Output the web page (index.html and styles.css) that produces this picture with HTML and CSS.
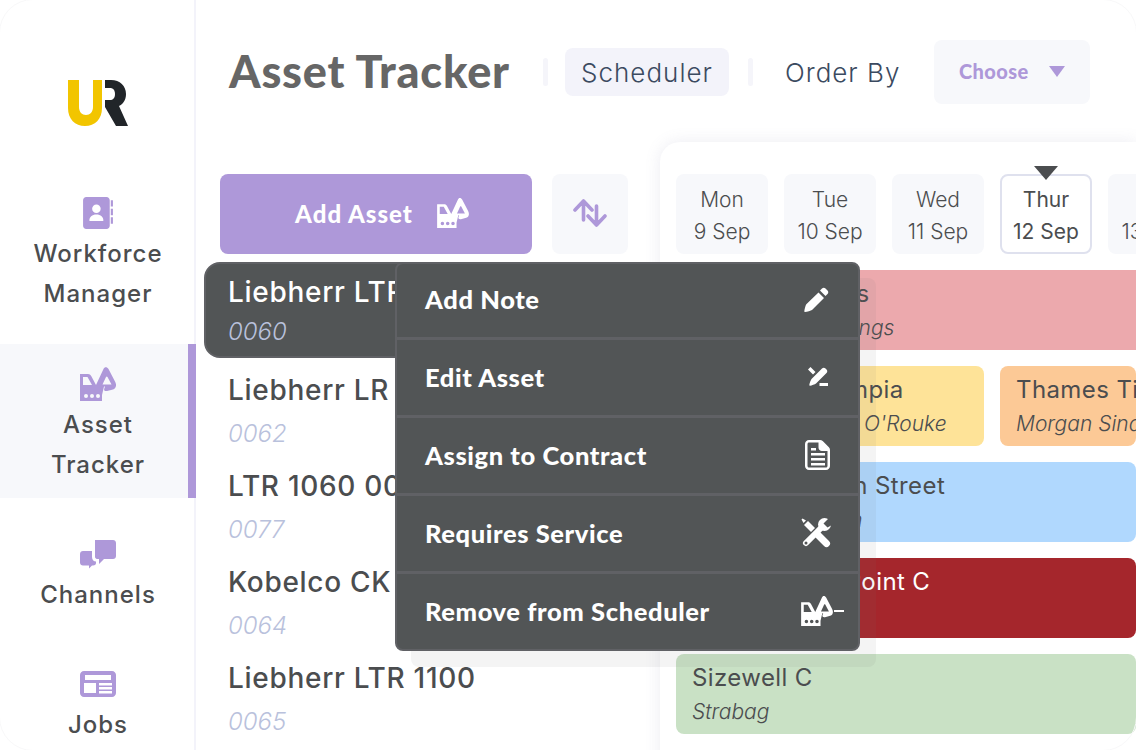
FILE: index.html
```html
<!DOCTYPE html>
<html lang="en">
<head>
    <meta charset="UTF-8">
    <title>Asset Tracker</title>
    <link rel="stylesheet" href="styles.css">
</head>
<body>
    <svg class="defs" width="0" height="0">
        <symbol id="digger" viewBox="0 0 36 34">
            <path fill-rule="evenodd" d="M0 7h8c1.500 0 2.500.7 3.200 2L16 18 23.500 2c1-2.500 3.500-2.500 5 0L35 14.500c2 3.500 1 7-2 8l-6 1.500c-2.500.5-3.500-1-2.500-3l.5-1.500h-1L22 28v6H0zM3 10v8h9L7.500 10zM26 10l-3.500 7.500h9L27.500 10c-.4-.7-1.100-.7-1.500 0zM6 27a2 2 0 1 0 0 4 2 2 0 0 0 0-4zM12 27a2 2 0 1 0 0 4 2 2 0 0 0 0-4zM18 27a2 2 0 1 0 0 4 2 2 0 0 0 0-4z"/>
        </symbol>
    </svg>
    <div class="app">
        <nav class="side">
            <svg class="logo" viewBox="0 0 60 46" width="60" height="46">
                <path fill="#f2c500" d="M0 0h11v27c0 5 3 8 7 8s7-3 7-8V0h9v28c0 11-7 18-17 18S0 39 0 28z"/>
                <path fill="#212529" d="M37 0h6c9 0 15 6 15 14 0 6-3 10-7 12l9 20H48L37 27v-7h5c3 0 5-2 5-6s-2-6-5-6h-5z"/>
            </svg>
            <a class="nav-item workforce">
                <svg class="nav-icon" viewBox="0 0 28 30">
                    <path fill-rule="evenodd" d="M3 0h19c1.700 0 3 1.300 3 3v24c0 1.700-1.300 3-3 3H3c-1.700 0-3-1.300-3-3V3c0-1.700 1.300-3 3-3zM12.500 7a4 4 0 1 0 0 8 4 4 0 0 0 0-8zM6 22.500h13c.3-3.500-2.500-6-6.500-6s-6.800 2.500-6.500 6z"/>
                    <path d="M26 3h2v6h-2zM26 11h2v6h-2zM26 19h2v6h-2z"/>
                </svg>
                <span>Workforce<br>Manager</span>
            </a>
            <a class="nav-item active">
                <svg class="nav-icon"><use href="#digger"/></svg>
                <span>Asset<br>Tracker</span>
            </a>
            <a class="nav-item channels">
                <svg class="nav-icon" viewBox="0 0 36 28">
                    <path d="M15 0h18c1.700 0 3 1.300 3 3v13c0 1.700-1.300 3-3 3H24l-5 5v-5h-1c-3 0-3-2-3-3z"/>
                    <path d="M3 11h9v6c0 3 2 4.500 4 4.500V23c0 1.500-1 2.500-3 2.500h-1l-3 3v-3H3c-1.700 0-3-1.300-3-3V14c0-1.700 1.300-3 3-3z"/>
                </svg>
                <span>Channels</span>
            </a>
            <a class="nav-item jobs">
                <svg class="nav-icon" viewBox="0 0 36 26">
                    <path fill-rule="evenodd" d="M4 0h28c2.200 0 4 1.800 4 4v18c0 2.200-1.800 4-4 4H4c-2.200 0-4-1.800-4-4V4c0-2.200 1.800-4 4-4zM5 4v5h26V4zM4 12v10h12V12zM19 12v2.500h13V12zM19 16v2.500h13V16zM19 20v2.500h13V20z"/>
                </svg>
                <span>Jobs</span>
            </a>
        </nav>
        <main class="main">
            <header class="top">
                <h1>Asset Tracker</h1>
                <i class="sep"></i>
                <span class="tab">Scheduler</span>
                <i class="sep"></i>
                <span class="order">Order By</span>
                <span class="choose">Choose <b class="caret"></b></span>
            </header>
            <div class="content">
                <section class="assets">
                    <div class="actions">
                        <button class="add">Add Asset <svg class="add-icon"><use href="#digger"/></svg></button>
                        <button class="sort">
                            <svg viewBox="0 0 34 28" width="34" height="28" fill="none" stroke="#ae98d9" stroke-width="3.600" stroke-linecap="round" stroke-linejoin="round">
                                <path d="M2 11l8.500-9L19 11M10.500 3v18M15 17l8.500 9 8.500-9M23.500 25V7"/>
                            </svg>
                        </button>
                    </div>
                    <ul class="list">
                        <li class="asset selected"><strong>Liebherr LTR 1090</strong><em>0060</em></li>
                        <li class="asset"><strong>Liebherr LR 1300</strong><em>0062</em></li>
                        <li class="asset"><strong>LTR 1060 001</strong><em>0077</em></li>
                        <li class="asset"><strong>Kobelco CK 1100</strong><em>0064</em></li>
                        <li class="asset"><strong>Liebherr LTR 1100</strong><em>0065</em></li>
                    </ul>
                </section>
                <section class="panel">
                    <div class="days">
                        <div class="day"><span>Mon</span><span>9 Sep</span></div>
                        <div class="day"><span>Tue</span><span>10 Sep</span></div>
                        <div class="day"><span>Wed</span><span>11 Sep</span></div>
                        <div class="day today"><span>Thur</span><span>12 Sep</span></div>
                        <div class="day"><span>Fri</span><span>13 Sep</span></div>
                    </div>
                    <div class="lane"><div class="job red"><strong>Docklines</strong><em>Jack Hastings</em></div></div>
                    <div class="lane">
                        <div class="job yellow"><strong>Olympia</strong><em>Sean O'Rouke</em></div>
                        <div class="job orange"><strong>Thames Tideway</strong><em>Morgan Sindall</em></div>
                    </div>
                    <div class="lane"><div class="job blue"><strong>Euston Street</strong><em>Costain</em></div></div>
                    <div class="lane"><div class="job crimson"><strong>Hinkley Point C</strong><em>EDF</em></div></div>
                    <div class="lane"><div class="job green"><strong>Sizewell C</strong><em>Strabag</em></div></div>
                </section>
            </div>
        </main>
        <ul class="menu">
            <li>Add Note
                <svg viewBox="0 0 28 28" width="28" height="28"><path d="M19 3.500c1-1 2.500-1 3.500 0l2 2c1 1 1 2.500 0 3.500l-2 2-5.500-5.500zM15.500 7.500L21 13 9 25c-1 .8-5 1.800-7 2-.5 0-.8-.3-.7-.8.200-2 1.200-6 2-7z"/></svg>
            </li>
            <li class="edit">Edit Asset
                <svg viewBox="0 0 22 22" width="22" height="22"><path d="M15 2.500c1-1 2.500-1 3.500 0l1 1c1 1 1 2.500 0 3.500L9 17.500c-1 .8-4.500 2-6 2.200-.5 0-.8-.3-.7-.8.2-1.500 1.400-5 2.200-6zM1 3.500L3.500 1l5 5L6 8.500zM12.500 17h8.500v3h-8.500z"/></svg>
            </li>
            <li>Assign to Contract
                <svg viewBox="0 0 26 30" width="26" height="30"><path fill-rule="evenodd" d="M4 0h11c1 0 2 .4 2.700 1.100l6.200 6.200c.7.700 1.100 1.700 1.100 2.700V26c0 2.200-1.800 4-4 4H4c-2.200 0-4-1.800-4-4V4c0-2.200 1.800-4 4-4zM4 2.500c-.8 0-1.500.7-1.500 1.500v22c0 .8.700 1.500 1.500 1.500h17c.8 0 1.500-.7 1.500-1.500V11H17c-2 0-3.500-1.500-3.500-3.500V2.500zM6 13h14v2.500H6zM6 18h14v2.500H6zM6 23h14v2.500H6zM6 8h5v2.500H6z"/></svg>
            </li>
            <li>Requires Service
                <svg viewBox="0 0 30 30" width="30" height="30">
                    <path d="M3 7l4-4 7 7-4 4z"/>
                    <path d="M2.500 5L5 2.500 1.500 .5 .5 1.500z"/>
                    <path stroke="#fff" stroke-width="7" stroke-linecap="round" d="M16 16l9.500 9.500"/>
                    <circle cx="23.500" cy="6.500" r="6.500"/>
                    <path stroke="#fff" stroke-width="6" stroke-linecap="round" d="M19 11L5 25"/>
                    <path fill="#525556" d="M22.500 5.500l7-7 2 8-5 3z"/>
                    <circle cx="5" cy="25" r="1.500" fill="#525556"/>
                </svg>
            </li>
            <li>Remove from Scheduler
                <span class="minus-icon"><svg><use href="#digger"/></svg><i></i></span>
            </li>
        </ul>
    </div>
</body>
</html>
```

FILE: styles.css
```css
* {
    padding: 0;
    margin: 0;
    box-sizing: border-box;
}
body {
    width: 1136px;
    height: 750px;
    overflow: hidden;
    background: #fff;
    font-family: "Inter", "Liberation Sans", sans-serif;
    color: #4b4d4f;
}
ul {
    list-style: none;
}
.defs {
    position: absolute;
}
.app {
    display: flex;
    width: 1136px;
    height: 750px;
    position: relative;
}
.app::after {
    content: "";
    position: absolute;
    inset: -1px;
    border: 1px solid #f8f8f9;
    border-radius: 34px;
    pointer-events: none;
}

/* sidebar */
.side {
    flex: 0 0 196px;
    width: 196px;
    min-width: 0;
    display: flex;
    flex-direction: column;
    border-right: 2px solid #f3f3fa;
    padding-top: 80px;
}
.logo {
    flex: none;
    align-self: center;
    margin: 0 0 48px 2px;
}
.nav-item {
    flex: none;
    display: flex;
    flex-direction: column;
    align-items: center;
    text-align: center;
    width: 196px;
    font-size: 24px;
    font-weight: 500;
    line-height: 40px;
    letter-spacing: 1px;
    fill: #ae98d9;
}
.nav-icon {
    flex: none;
    width: 36px;
    height: 32px;
    display: block;
    margin-bottom: 5px;
}
.workforce {
    height: 170px;
    padding-top: 23px;
}
.active {
    height: 154px;
    background: #f7f8fb;
    border-right: 8px solid #ae98d9;
    padding-top: 23px;
}
.active span, .active .nav-icon {
    margin-right: -8px;
}
.active .nav-icon {
    height: 34px;
    margin-bottom: 4px;
}
.channels {
    height: 150px;
    padding-top: 40px;
}
.jobs {
    padding-top: 20px;
}

/* header */
.main {
    flex: 1;
    min-width: 0;
}
.top {
    display: flex;
    align-items: center;
    height: 104px;
    padding: 40px 0 0 33px;
}
h1 {
    font-family: "Lato", sans-serif;
    font-size: 45px;
    font-weight: 900;
    color: #666;
    letter-spacing: .8px;
    line-height: 64px;
    width: 314px;
    white-space: nowrap;
    position: relative;
    top: -1px;
}
.sep {
    flex: none;
    width: 5px;
    height: 28px;
    border-radius: 3px;
    background: #f5f5fa;
}
.tab {
    flex: none;
    margin: 0 19px 0 17px;
    width: 164px;
    height: 48px;
    line-height: 50px;
    text-align: center;
    border-radius: 8px;
    background: #f3f3fa;
    font-size: 26px;
    font-weight: 300;
    color: #3b4a60;
    letter-spacing: 1px;
    white-space: nowrap;
}
.order {
    flex: none;
    margin-left: 32px;
    width: 149px;
    font-size: 26px;
    font-weight: 300;
    color: #3b4a60;
    letter-spacing: 1px;
    white-space: nowrap;
}
.choose {
    flex: none;
    display: flex;
    align-items: center;
    gap: 20px;
    width: 156px;
    height: 64px;
    padding: 0 0 2px 25px;
    border-radius: 8px;
    background: #f7f8fb;
    font-family: "Lato", sans-serif;
    font-size: 20px;
    font-weight: 900;
    color: #ae98d9;
    letter-spacing: .4px;
}
.caret {
    width: 0;
    height: 0;
    border-left: 8px solid transparent;
    border-right: 8px solid transparent;
    border-top: 11px solid #ae98d9;
}

/* asset list */
.content {
    display: flex;
    padding-top: 38px;
}
.assets {
    flex: 0 0 464px;
    padding: 32px 0 0 24px;
}
.actions {
    display: flex;
    gap: 20px;
}
.add {
    display: flex;
    align-items: center;
    justify-content: center;
    gap: 24px;
    width: 312px;
    height: 80px;
    padding: 0 0 2px 12px;
    border: 0;
    border-radius: 8px;
    background: #ae98d9;
    color: #fff;
    fill: #fff;
    font-family: "Lato", sans-serif;
    font-size: 24px;
    font-weight: 900;
    letter-spacing: 1px;
}
.add-icon {
    width: 32px;
    height: 30px;
}
.sort {
    width: 76px;
    height: 80px;
    border: 0;
    border-radius: 8px;
    background: #f7f8fb;
}
.list {
    margin: 8px 0 0 -16px;
}
.asset {
    height: 96px;
    padding: 10px 0 0 24px;
}
.asset strong {
    display: block;
    font-size: 28px;
    font-weight: 500;
    line-height: 40px;
    letter-spacing: .7px;
    white-space: nowrap;
}
.asset em {
    display: block;
    margin-top: 4px;
    font-size: 24px;
    font-weight: 300;
    line-height: 40px;
    color: #b9c1dc;
}
.selected {
    width: 290px;
    margin-bottom: 2px;
    padding-top: 8px;
    padding-left: 22px;
    background: #525556;
    border: 2px solid #606165;
    border-radius: 16px;
}
.selected strong {
    color: #fff;
}
.selected em {
    margin-top: 0;
}

/* calendar */
.panel {
    flex: 1;
    min-width: 0;
    height: 640px;
    padding: 32px 0 0 16px;
    border-radius: 20px 0 0 0;
    box-shadow: 0 0 16px rgba(120, 120, 160, .14);
    overflow: hidden;
}
.days {
    display: flex;
    gap: 16px;
}
.day {
    flex: 0 0 92px;
    height: 80px;
    display: flex;
    flex-direction: column;
    align-items: center;
    padding-top: 10px;
    border-radius: 8px;
    background: #f7f8fb;
    font-size: 21px;
    font-weight: 300;
    line-height: 32px;
    white-space: nowrap;
    position: relative;
}
.today {
    background: #fff;
    border: 2px solid #dfe1ee;
    padding-top: 8px;
}
.today span {
    font-weight: 400;
}
.today::before {
    content: "";
    position: absolute;
    top: -10px;
    left: 32px;
    border-left: 12px solid transparent;
    border-right: 12px solid transparent;
    border-top: 14px solid #4b4d4f;
}
.lane {
    display: flex;
    gap: 16px;
    height: 80px;
    margin-top: 16px;
    white-space: nowrap;
}
.job {
    flex: 1;
    min-width: 0;
    padding: 4px 0 0 16px;
    border-radius: 8px;
    overflow: hidden;
}
.job strong {
    display: block;
    font-size: 24px;
    font-weight: 400;
    line-height: 40px;
    letter-spacing: .4px;
}
.job em {
    display: block;
    font-size: 21px;
    font-weight: 300;
    line-height: 28px;
}
.red {
    background: #eca9ad;
    padding-left: 79px;
    border-radius: 8px 0 0 8px;
}
.yellow {
    flex: 0 0 308px;
    background: #fee398;
    padding-left: 132px;
}
.orange {
    background: #fcc996;
}
.blue {
    background: #b0d8fe;
    padding-left: 112px;
}
.crimson {
    background: #a5262c;
    color: #fff;
    padding-left: 76px;
}
.green {
    background: #c9e1c5;
}

/* context menu */
.menu {
    position: absolute;
    left: 395px;
    top: 262px;
    width: 465px;
    height: 389px;
    display: flex;
    flex-direction: column;
    background: #525556;
    border: 2px solid #606165;
    border-radius: 8px;
    box-shadow: 16px 16px 0 rgba(110, 110, 120, .08);
    color: #fff;
    fill: #fff;
    font-family: "Lato", sans-serif;
    font-size: 25.5px;
    font-weight: 900;
    letter-spacing: .6px;
}
.menu li {
    flex: none;
    height: 78px;
    display: flex;
    align-items: center;
    justify-content: space-between;
    padding: 0 27px 1px 28px;
    border-top: 3px solid #606165;
}
.menu li:first-child {
    height: 73px;
    border-top: 0;
    padding-bottom: 3px;
}
.menu .edit svg {
    margin-right: 2px;
}
.minus-icon {
    display: flex;
    align-items: center;
    margin-right: -13px;
}
.minus-icon svg {
    width: 32px;
    height: 30px;
}
.minus-icon i {
    width: 10px;
    height: 2px;
    margin-left: 1px;
    background: #fff;
}
```
